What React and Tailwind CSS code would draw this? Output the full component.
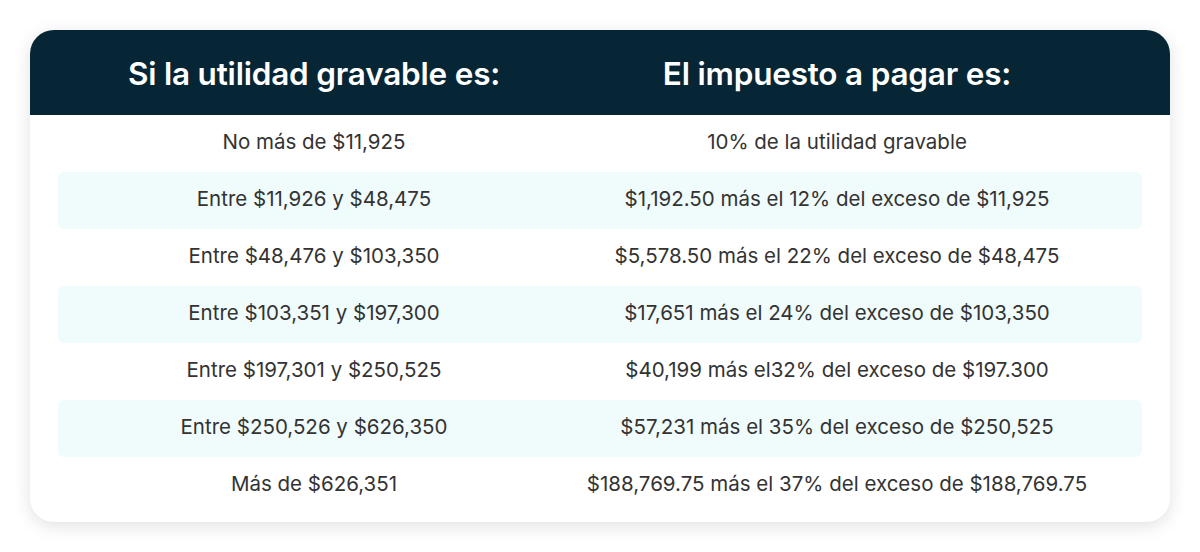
import React from "react";

const rows = [
  ["No más de $11,925", "10% de la utilidad gravable"],
  ["Entre $11,926 y $48,475", "$1,192.50 más el 12% del exceso de $11,925"],
  ["Entre $48,476 y $103,350", "$5,578.50 más el 22% del exceso de $48,475"],
  ["Entre $103,351 y $197,300", "$17,651 más el 24% del exceso de $103,350"],
  ["Entre $197,301 y $250,525", "$40,199 más el32% del exceso de $197.300"],
  ["Entre $250,526 y $626,350", "$57,231 más el 35% del exceso de $250,525"],
  ["Más de $626,351", "$188,769.75 más el 37% del exceso de $188,769.75"],
];

export default function App() {
  return (
    <div className="w-[1200px] h-[552px] bg-white pt-[30px] px-[30px] font-['Inter',sans-serif]">
      <div className="w-[1140px] h-[492px] rounded-[24px] bg-white shadow-[0_4px_18px_rgba(0,0,0,0.12)] overflow-hidden">
        <div className="h-[85px] bg-[#072635] grid grid-cols-[512px_534px] px-[28px] pt-[3px] items-center text-white text-[31.5px] font-semibold tracking-[-0.2px]">
          <div className="text-center">Si la utilidad gravable es:</div>
          <div className="text-center">El impuesto a pagar es:</div>
        </div>
        <div className="px-[28px] flex flex-col">
          {rows.map((r, i) => (
            <div
              key={i}
              className={`h-[57px] grid grid-cols-[512px_534px] items-center text-[20.5px] text-[#333333] rounded-[6px] pb-[2px] ${
                i % 2 === 1 ? "bg-[#f0fbfc]" : ""
              }`}
            >
              <div className="text-center">{r[0]}</div>
              <div className="text-center">{r[1]}</div>
            </div>
          ))}
        </div>
      </div>
    </div>
  );
}
